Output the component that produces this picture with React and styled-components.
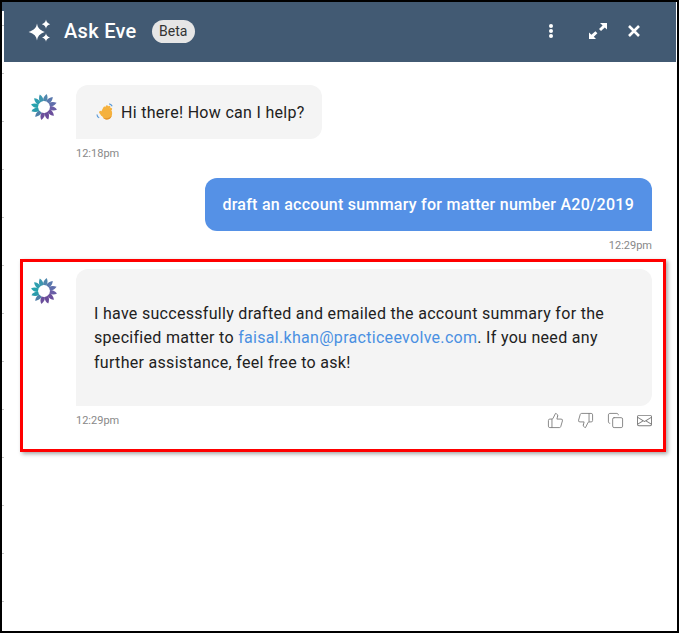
import React from 'react';
import styled, { createGlobalStyle } from 'styled-components';
import { ThumbsUp, ThumbsDown, Copy } from 'lucide-react';
import { BsEnvelope } from 'react-icons/bs';

const GlobalStyle = createGlobalStyle`
  html, body {
    margin: 0;
    background: #fff;
  }
  body {
    font-family: Roboto, "Liberation Sans", sans-serif;
  }
`;

const petalColors = [
  '#4f86ad', '#5a78ad', '#5f6dab', '#6a5ea6', '#6b4f9c', '#6a4c9a',
  '#6b4f9c', '#4f7fa8', '#2a9bab', '#27a3ae', '#2f9fb0', '#3d96ae',
];

const EveLogo = () => (
  <svg width="28" height="28" viewBox="0 0 28 28">
    {petalColors.map((color, i) => (
      <path
        key={i}
        d="M13 7.8 C13 5 14.4 2.8 16.6 1 C17.9 3.4 17.9 6 16.4 8.6 Z"
        fill={color}
        transform={`rotate(${i * 30} 14 14)`}
      />
    ))}
  </svg>
);

const Sparkles = () => (
  <svg width="24" height="24" viewBox="0 0 24 24" fill="#fff">
    <path d="M9 4.6 C9.8 9 11.4 11 16.8 13 C11.4 15 9.8 17 9 21.6 C8.2 17 6.6 15 0.6 13 C6.6 11 8.2 9 9 4.6 Z" />
    <path d="M18 0.6 C18.4 3 19.2 4.2 22.2 5.2 C19.2 6.2 18.4 7.4 18 9.8 C17.6 7.4 16.8 6.2 13.8 5.2 C16.8 4.2 17.6 3 18 0.6 Z" />
    <path d="M18 14.2 C18.4 16.4 19.2 17.4 22 18.4 C19.2 19.4 18.4 20.4 18 22.8 C17.6 20.4 16.8 19.4 14 18.4 C16.8 17.4 17.6 16.4 18 14.2 Z" />
  </svg>
);

const Dots = () => (
  <svg width="6" height="14" viewBox="0 0 6 14" fill="#fff">
    <circle cx="3" cy="2" r="2" />
    <circle cx="3" cy="7" r="2" />
    <circle cx="3" cy="12" r="2" />
  </svg>
);

const ExpandArrows = () => (
  <svg width="18" height="16" viewBox="0 0 18 16" fill="#fff">
    <path d="M11 0 H18 V6.4 L15.8 4.4 L12 8 L10 6 L13.6 2.4 Z" />
    <path d="M0 9.4 V16 H7 L4.8 13.8 L8.4 10.2 L6.4 8.2 L2.4 11.8 Z" />
  </svg>
);

const CloseIcon = () => (
  <svg width="12" height="12" viewBox="0 0 12 12" stroke="#fff" strokeWidth="2.6">
    <path d="M1 1 L11 11 M11 1 L1 11" />
  </svg>
);

const WaveEmoji = () => (
  <svg width="18" height="18" viewBox="0 0 18 18">
    <g stroke="#f5b13d" strokeWidth="2.6" strokeLinecap="round">
      <path d="M6.4 9 L8.6 4.8" />
      <path d="M8.4 9 L11 3.6" />
      <path d="M10.4 9 L13.2 4.2" />
      <path d="M12.4 9.4 L14.8 6" />
      <path d="M6.2 11.6 L4.4 9.2" />
    </g>
    <path
      d="M5.4 8.6 L13.4 6.4 L15.8 8 C16.6 10.6 16 13.6 14 15.4 C12 17 9 16.8 7.4 15 L5 11.4 Z"
      fill="#f5b13d"
    />
    <path d="M7.4 15 C9 16.8 12 17 14 15.4 C15 14.5 15.6 13.4 15.9 12.2 C14.6 14.6 10.6 16 7.4 15 Z" fill="#e2902a" />
    <path d="M13.2 0.8 C14.4 1 15.6 1.8 16.2 3.2 M1 11.4 C1 12.8 1.8 14.2 3.2 14.8" fill="none" stroke="#5c9bd8" strokeWidth="1.2" />
  </svg>
);

const App = () => (
  <>
    <GlobalStyle />
    <Frame>
      <Panel>
        <Header>
          <HeaderLeft>
            <Sparkles />
            <Title>Ask Eve</Title>
            <Badge>Beta</Badge>
          </HeaderLeft>
          <HeaderActions>
            <Dots />
            <ExpandSlot><ExpandArrows /></ExpandSlot>
            <CloseIcon />
          </HeaderActions>
        </Header>
        <Messages>
          <Row>
            <Avatar><EveLogo /></Avatar>
            <Column>
              <Bubble>
                <WaveEmoji /> Hi there! How can I help?
              </Bubble>
              <MetaRow><Time>12:18pm</Time></MetaRow>
            </Column>
          </Row>
          <UserRow>
            <UserBubble>draft an account summary for matter number A20/2019</UserBubble>
            <MetaRow $end><Time>12:29pm</Time></MetaRow>
          </UserRow>
          <HighlightRow>
            <Avatar><EveLogo /></Avatar>
            <Column>
              <ReplyBubble>
                I have successfully drafted and emailed the account summary for the specified matter to{' '}
                <MailLink>faisal.khan@practiceevolve.com</MailLink>. If you need any further assistance, feel free to ask!
              </ReplyBubble>
              <MetaRow>
                <Time>12:29pm</Time>
                <Feedback>
                  <ThumbsUp size={17} strokeWidth={1.25} />
                  <ThumbsDown size={17} strokeWidth={1.25} />
                  <Copy size={17} strokeWidth={1.25} />
                  <BsEnvelope size={15} />
                </Feedback>
              </MetaRow>
            </Column>
          </HighlightRow>
        </Messages>
      </Panel>
    </Frame>
  </>
);

const Frame = styled.div`
  position: relative;
  box-sizing: border-box;
  width: 679px;
  height: 633px;
  border: 2px solid #000;
  padding: 0 1px 0 2px;
  &::before {
    content: '';
    position: absolute;
    left: 0;
    top: 0;
    bottom: 0;
    width: 2px;
    background:
      linear-gradient(#425a73, #425a73) top / 100% 9px no-repeat,
      repeating-linear-gradient(to bottom, #fff 0, #fff 23px, #c4c4c4 23px, #c4c4c4 24px, #fff 24px, #fff 48px);
  }
`;

const Panel = styled.div`
  display: flex;
  flex-direction: column;
  height: 100%;
  background: #fff;
`;

const Header = styled.header`
  display: flex;
  align-items: center;
  justify-content: space-between;
  flex: none;
  box-sizing: border-box;
  height: 60px;
  padding: 0 36px 2px 24px;
  background: #425a73;
`;

const HeaderLeft = styled.div`
  display: flex;
  align-items: center;
`;

const Title = styled.h1`
  margin: 0 15px 0 12px;
  font-size: 20px;
  font-weight: 500;
  letter-spacing: 0.3px;
  color: #fff;
`;

const Badge = styled.span`
  height: 23px;
  padding: 0 7.5px;
  border-radius: 12px;
  background: #e6e6e6;
  color: #333;
  font-size: 14px;
  line-height: 23px;
`;

const HeaderActions = styled.div`
  display: flex;
  align-items: center;
`;

const ExpandSlot = styled.div`
  display: flex;
  margin: 0 21px 0 35px;
`;

const Messages = styled.div`
  display: flex;
  flex-direction: column;
  padding: 23px 10px 0 16px;
`;

const Row = styled.div`
  display: flex;
  padding: 0 14px 0 10px;
`;

const Avatar = styled.div`
  flex: none;
  width: 28px;
  height: 28px;
  margin: 8px 18px 0 0;
`;

const Column = styled.div`
  flex: 1;
  display: flex;
  flex-direction: column;
  align-items: flex-start;
  min-width: 0;
`;

const Bubble = styled.div`
  display: flex;
  align-items: center;
  gap: 7px;
  height: 54px;
  box-sizing: border-box;
  padding: 0 17px 0 20px;
  border-radius: 12px 12px 12px 0;
  background: #f4f4f4;
  color: #212121;
  font-size: 16px;
  letter-spacing: 0.3px;
`;

const UserRow = styled.div`
  display: flex;
  flex-direction: column;
  align-items: flex-end;
  margin-top: 17px;
  padding: 0 14px 0 10px;
`;

const UserBubble = styled.div`
  display: flex;
  align-items: center;
  height: 53px;
  box-sizing: border-box;
  padding: 0 18px 0 17px;
  border-radius: 12px 12px 0 12px;
  background: #5591e6;
  color: #fff;
  font-size: 16px;
  font-weight: 500;
  letter-spacing: 0.26px;
`;

const HighlightRow = styled.div`
  display: flex;
  margin-top: 6px;
  padding: 7px 11px 21px 7px;
  border: 3px solid #f00;
  box-shadow: 2px 2px 4px rgba(0, 0, 0, 0.35);
`;

const ReplyBubble = styled.div`
  align-self: stretch;
  box-sizing: border-box;
  padding: 32.5px 18px 31px;
  border-radius: 12px 12px 12px 0;
  background: #f4f4f4;
  color: #212121;
  font-size: 16px;
  line-height: 24.5px;
  letter-spacing: 0.3px;
`;

const MailLink = styled.a`
  color: #4a90e2;
`;

const MetaRow = styled.div`
  display: flex;
  align-self: stretch;
  align-items: center;
  justify-content: ${(p) => (p.$end ? 'flex-end' : 'space-between')};
  height: 14px;
  margin-top: 8px;
`;

const Time = styled.span`
  color: #888;
  font-size: 11px;
  line-height: 14px;
`;

const Feedback = styled.div`
  display: flex;
  align-items: center;
  gap: 13px;
  margin-top: -2px;
  color: #7c7c7c;
`;

export default App;
